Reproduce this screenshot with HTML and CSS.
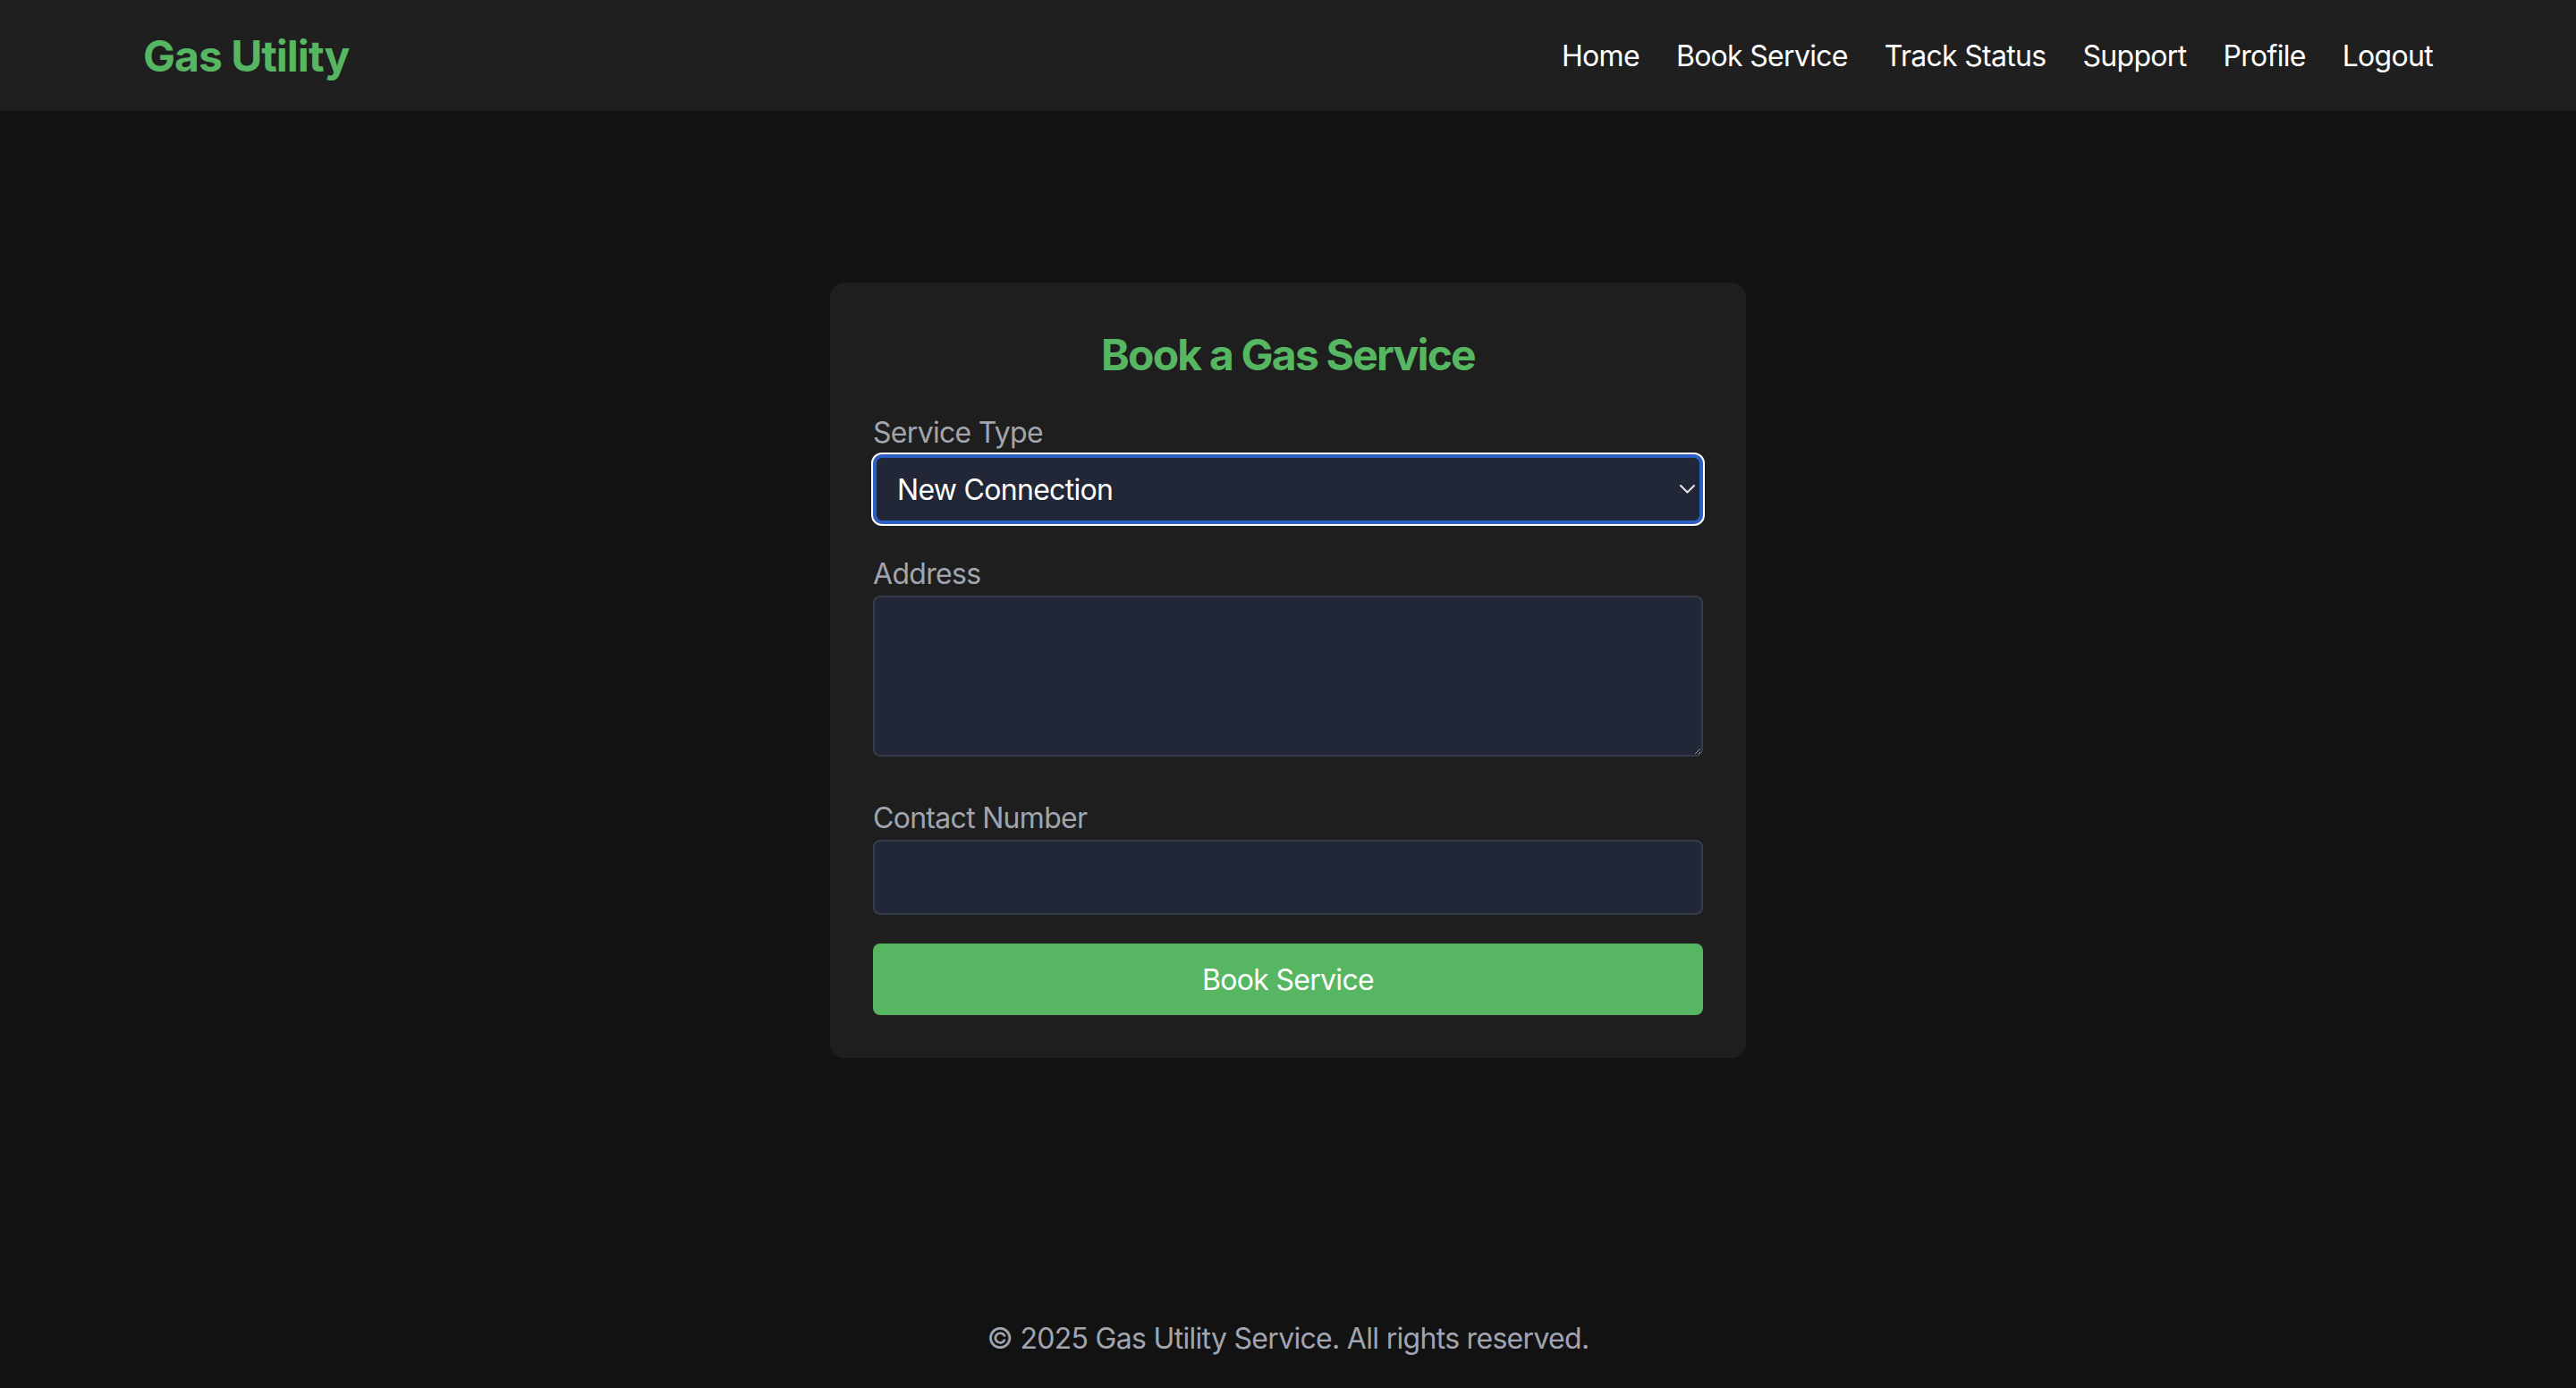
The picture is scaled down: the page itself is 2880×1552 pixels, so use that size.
FILE: index.html
```html
<!DOCTYPE html>
<html lang="en">
<head>
<meta charset="utf-8">
<title>Book a Gas Service - Gas Utility</title>
<link rel="stylesheet" href="styles.css">
</head>
<body>
<header class="site-header">
  <div class="header-inner">
    <a class="brand" href="#">Gas Utility</a>
    <nav class="nav">
      <a href="#">Home</a>
      <a href="#">Book Service</a>
      <a href="#">Track Status</a>
      <a href="#">Support</a>
      <a href="#">Profile</a>
      <a href="#">Logout</a>
    </nav>
  </div>
</header>
<main class="main">
  <form class="card">
    <h2 class="card-title">Book a Gas Service</h2>
    <div class="field field-select">
      <label class="label" for="service">Service Type</label>
      <div class="select-wrap">
        <select id="service" class="select">
          <option>New Connection</option>
          <option>Cylinder Refill</option>
          <option>Repair</option>
        </select>
        <svg class="chevron" width="17" height="10" viewBox="0 0 17 10"><polyline points="1,1 8.5,8.5 16,1" fill="none" stroke="#e5e7eb" stroke-width="2" stroke-linecap="round" stroke-linejoin="round"/></svg>
      </div>
    </div>
    <div class="field field-area">
      <label class="label" for="address">Address</label>
      <textarea id="address" class="textarea"></textarea>
    </div>
    <div class="field field-input">
      <label class="label" for="contact">Contact Number</label>
      <input id="contact" class="input" type="text">
    </div>
    <button class="btn" type="button">Book Service</button>
  </form>
</main>
<footer class="footer">© 2025 Gas Utility Service. All rights reserved.</footer>
</body>
</html>
```

FILE: styles.css
```css
* { box-sizing: border-box; }
html, body { margin: 0; padding: 0; }
body {
  background: #121212;
  color: #ffffff;
  font-family: Inter, "Noto Sans", "Liberation Sans", sans-serif;
  letter-spacing: -0.7px;
  min-height: 100vh;
  display: flex;
  flex-direction: column;
}
.site-header {
  background: #1f1f1f;
  height: 124px;
}
.header-inner {
  max-width: 2560px;
  margin: 0 auto;
  height: 100%;
  display: flex;
  align-items: center;
  justify-content: space-between;
}
.brand {
  color: #57b661;
  font-size: 48px;
  font-weight: 700;
  letter-spacing: -1px;
  text-decoration: none;
}
.nav {
  display: flex;
  gap: 41px;
}
.nav a {
  color: #ffffff;
  font-size: 32px;
  text-decoration: none;
}
.main {
  flex: 1;
  display: flex;
  justify-content: center;
  align-items: flex-start;
  padding-top: 192px;
}
.card {
  width: 1024px;
  background: #1e1e1e;
  border-radius: 16px;
  padding: 48px;
}
.card-title {
  margin: 4px 0 38px;
  text-align: center;
  color: #57b661;
  font-size: 48px;
  font-weight: 700;
  letter-spacing: -1.8px;
  line-height: 58px;
}
.label {
  display: block;
  color: #a0a5af;
  font-size: 32px;
  line-height: 39px;
  margin-bottom: 5px;
}
.field-select { margin-bottom: 36px; }
.field-area { margin-bottom: 49px; }
.field-input { margin-bottom: 32px; }
.select-wrap { position: relative; }
.select {
  display: block;
  width: 100%;
  height: 78px;
  appearance: none;
  -webkit-appearance: none;
  background: #212736;
  color: #ffffff;
  font-family: inherit;
  font-size: 32px;
  letter-spacing: -0.7px;
  border: 4px solid #2c5fc6;
  border-radius: 10px;
  outline: 2px solid #ffffff;
  outline-offset: 0;
  padding: 0 40px 0 23px;
}
.chevron {
  position: absolute;
  right: 9px;
  top: 34px;
  pointer-events: none;
}
.textarea, .input {
  display: block;
  width: 100%;
  background: #212736;
  border: 2px solid #353d4c;
  border-radius: 8px;
  color: #ffffff;
  font-family: inherit;
  font-size: 32px;
  color-scheme: dark;
}
.textarea {
  height: 180px;
  resize: vertical;
  padding: 16px 24px;
}
.input {
  height: 84px;
  padding: 0 24px;
}
.btn {
  display: block;
  width: 100%;
  height: 80px;
  background: #57b661;
  border: none;
  border-radius: 8px;
  color: #ffffff;
  font-family: inherit;
  font-size: 32px;
  letter-spacing: -0.7px;
}
.footer {
  text-align: center;
  color: #a0a5af;
  font-size: 32px;
  line-height: 39px;
  padding-bottom: 36px;
}
```
